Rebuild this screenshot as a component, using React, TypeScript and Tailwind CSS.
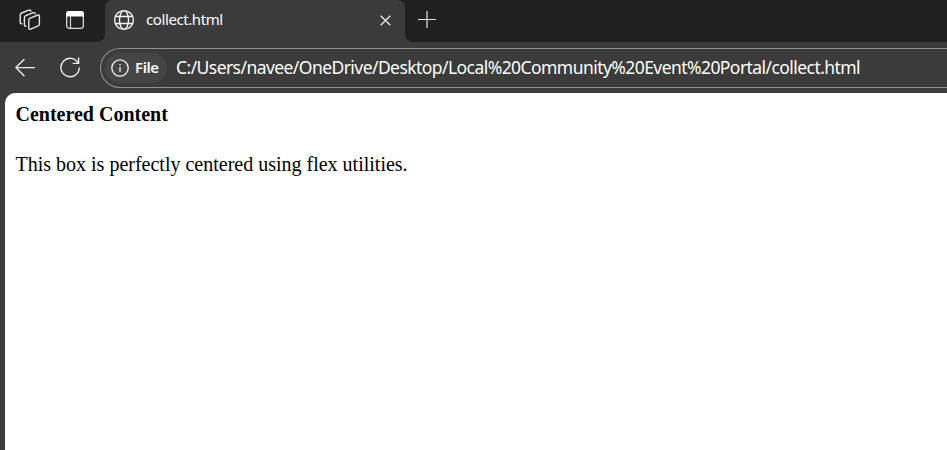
function WorkspacesIcon() {
  return (
    <svg width="22" height="22" viewBox="0 0 22 22" fill="none" stroke="#e8e8e8" strokeWidth="1.4" strokeLinejoin="round" strokeLinecap="round">
      <path d="M11.2 9.2 18.6 6.1Q20.4 5.6 20.4 7.4V15q0 1.4-1.2 1.9L11.6 20.2Q9.8 20.9 9.8 19V11.2q0-1.4 1.4-2Z" />
      <path d="M7 17.2Q5.4 17.4 5.4 15.7V8.6q0-1.4 1.4-2L14.2 3.7Q16 3.2 16.2 4.9" />
      <path d="M2.8 14.8Q1.2 15 1.2 13.3V6q0-1.4 1.4-2L9.8 1.2Q11.6.7 11.8 2.2" />
    </svg>
  );
}

function TabActionsIcon() {
  return (
    <svg width="18" height="18" viewBox="0 0 18 18" fill="none">
      <rect x=".7" y=".7" width="16.6" height="16.6" rx="2.5" stroke="#d8d8d8" strokeWidth="1.3" />
      <path d="M0 5.5V3a3 3 0 0 1 3-3h12a3 3 0 0 1 3 3v2.5Z" fill="#fff" />
      <path d="M4.5 5v12" stroke="#d8d8d8" strokeWidth="1.2" />
    </svg>
  );
}

function GlobeIcon() {
  return (
    <svg width="22" height="22" viewBox="0 0 22 22" fill="none" stroke="#f2f2f2" strokeWidth="1.4">
      <circle cx="11" cy="11" r="9.4" />
      <ellipse cx="11" cy="11" rx="4.5" ry="9.4" />
      <path d="M2.3 7.5h17.4M2.3 14.5h17.4" />
    </svg>
  );
}

export default function App() {
  return (
    <div className="flex h-[450px] w-[947px] flex-col overflow-hidden bg-[#3b3b3b] font-['Noto_Sans','Open_Sans',sans-serif] text-white">
      <header className="flex h-[42px] shrink-0 bg-[#3b3b3b]">
        <div className="flex w-[105px] shrink-0 items-start rounded-br-[8px] bg-[#202020] pt-[9px] pl-[19px]">
          <WorkspacesIcon />
          <div className="mt-[2px] ml-[25px]"><TabActionsIcon /></div>
        </div>
        <div className="flex w-[300px] shrink-0 bg-[#202020]">
          <div className="flex h-[42px] w-full items-start rounded-t-[8px] bg-[#3b3b3b] pt-[9px] pl-[8px]">
            <GlobeIcon />
            <span className="ml-[11px] text-[15px] leading-5 whitespace-nowrap tracking-[-0.41px]">collect.html</span>
            <svg className="mt-[6px] mr-[14px] ml-auto" width="11" height="11" viewBox="0 0 11 11" stroke="#f2f2f2" strokeWidth="1.3">
              <path d="m.7.7 9.6 9.6m0-9.6L.7 10.3" />
            </svg>
          </div>
        </div>
        <div className="flex-1 rounded-bl-[8px] bg-[#202020] pt-[11px] pl-[13px]">
          <svg width="18" height="18" viewBox="0 0 18 18" stroke="#e6e6e6" strokeWidth="1.2">
            <path d="M9 0v17M0 8.5h18" />
          </svg>
        </div>
      </header>
      <nav className="flex h-[51px] shrink-0 pt-[6px] pl-[15px]">
        <svg className="mt-[10px]" width="21" height="20" viewBox="0 0 21 20" fill="none" stroke="#eee" strokeWidth="1.4" strokeLinecap="round" strokeLinejoin="round">
          <path d="M19.5 9.6H1M9 1.4.9 9.6 9 17.8" />
        </svg>
        <svg className="mt-[9px] ml-[24px]" width="21" height="21" viewBox="0 0 21 21" fill="none" stroke="#eee" strokeWidth="1.4" strokeLinecap="round" strokeLinejoin="round">
          <path d="M18.3 6.3A9.2 9.2 0 1 0 19.3 11M18.6 1v5.4h-5.4" />
        </svg>
        <div className="ml-[19px] flex h-10 flex-1 items-center rounded-l-full border border-r-0 border-[#919191] bg-[#3b3b3b] pl-1">
          <div className="flex h-[30px] w-[62px] shrink-0 items-center rounded-full bg-[#454545] pl-[6px]">
            <svg width="18" height="18" viewBox="0 0 18 18" fill="none" stroke="#f2f2f2" strokeWidth="1.3">
              <circle cx="9" cy="9" r="8.2" />
              <path d="M9 8v5M9 5v1.5" />
            </svg>
            <span className="mb-[2px] ml-[6px] text-[15px] leading-5 font-semibold tracking-[-0.4px]">File</span>
          </div>
          <span className="mb-[2px] ml-[9px] text-[17.5px] leading-6 whitespace-nowrap tracking-[-0.56px]">C:/Users/navee/OneDrive/Desktop/Local%20Community%20Event%20Portal/collect.html</span>
        </div>
      </nav>
      <main className="ml-[5px] flex-1 rounded-tl-[10px] bg-white pt-[9px] pl-[10.5px] font-['Liberation_Serif',serif] text-black">
        <h4 className="text-[20px] leading-6 font-bold">Centered Content</h4>
        <p className="mt-[26px] text-[20px] leading-6">This box is perfectly centered using flex utilities.</p>
      </main>
    </div>
  );
}
